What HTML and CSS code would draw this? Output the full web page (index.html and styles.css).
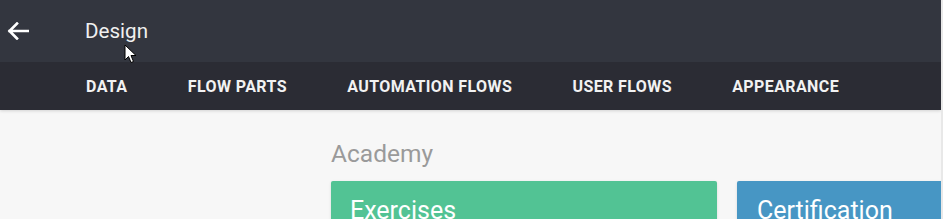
FILE: index.html
```html
<!DOCTYPE html>
<html>
<head>
<meta charset="utf-8">
<link rel="stylesheet" href="styles.css">
</head>
<body>
<header class="topbar">
  <svg class="back" width="22" height="18" viewBox="0 0 22 18"><path d="M10 1.5 L2.5 9 L10 16.5 M2.5 9 H21" fill="none" stroke="#fff" stroke-width="2.6" stroke-linecap="square"/></svg>
  <span class="title">Design</span>
  <svg class="cursor" width="13" height="20" viewBox="0 0 13 20"><path d="M1 1 V16 L4.5 12.5 L7 18.5 L9.5 17.5 L7 11.5 H12 Z" fill="#fff" stroke="#000" stroke-width="1"/></svg>
</header>
<nav class="tabs">
  <span class="tab">Data</span>
  <span class="tab">Flow parts</span>
  <span class="tab">Automation flows</span>
  <span class="tab">User flows</span>
  <span class="tab">Appearance</span>
</nav>
<main class="content">
  <h2 class="section">Academy</h2>
  <div class="cards">
    <div class="card green">Exercises</div>
    <div class="card blue">Certification</div>
  </div>
</main>
</body>
</html>
```
FILE: styles.css
```css
html, body { margin: 0; padding: 0; }
body {
  width: 943px;
  height: 219px;
  overflow: hidden;
  background: #f7f7f7;
  font-family: Roboto, "Liberation Sans", sans-serif;
  border-right: 2px solid #e8e8e8;
  box-sizing: border-box;
}
.topbar {
  height: 62px;
  background: #33363f;
  display: flex;
  align-items: center;
  position: relative;
}
.back { margin-left: 7px; margin-top: -1px; }
.title {
  margin-left: 56px;
  color: #f0f0f0;
  font-size: 20.6px;
  margin-top: -1px;
}
.cursor { position: absolute; left: 124px; top: 44px; }
.tabs {
  height: 48px;
  background: #2b2c34;
  display: flex;
  align-items: center;
  padding-left: 86px;
  gap: 60.3px;
  box-shadow: 0 1px 3px rgba(0,0,0,0.15);
}
.tab {
  color: #f2f2f2;
  font-weight: 700;
  font-size: 16px;
  letter-spacing: 0.4px;
  text-transform: uppercase;
}
.content { padding-left: 331px; }
.section {
  margin: 0;
  padding-top: 30px;
  font-weight: 400;
  font-size: 24.5px;
  color: #9a9a9a;
  line-height: 28px;
}
.cards {
  display: flex;
  gap: 20px;
  margin-top: 13px;
}
.card {
  flex-shrink: 0;
  height: 60px;
  border-radius: 2px;
  color: #fff;
  font-size: 25px;
  padding: 15px 19px;
  box-sizing: border-box;
  white-space: nowrap;
  box-shadow: 0 1px 3px rgba(0,0,0,0.12);
}
.green { background: #52c394; width: 386px; }
.blue { background: #4796c4; width: 220px; padding-left: 20px; }
```
